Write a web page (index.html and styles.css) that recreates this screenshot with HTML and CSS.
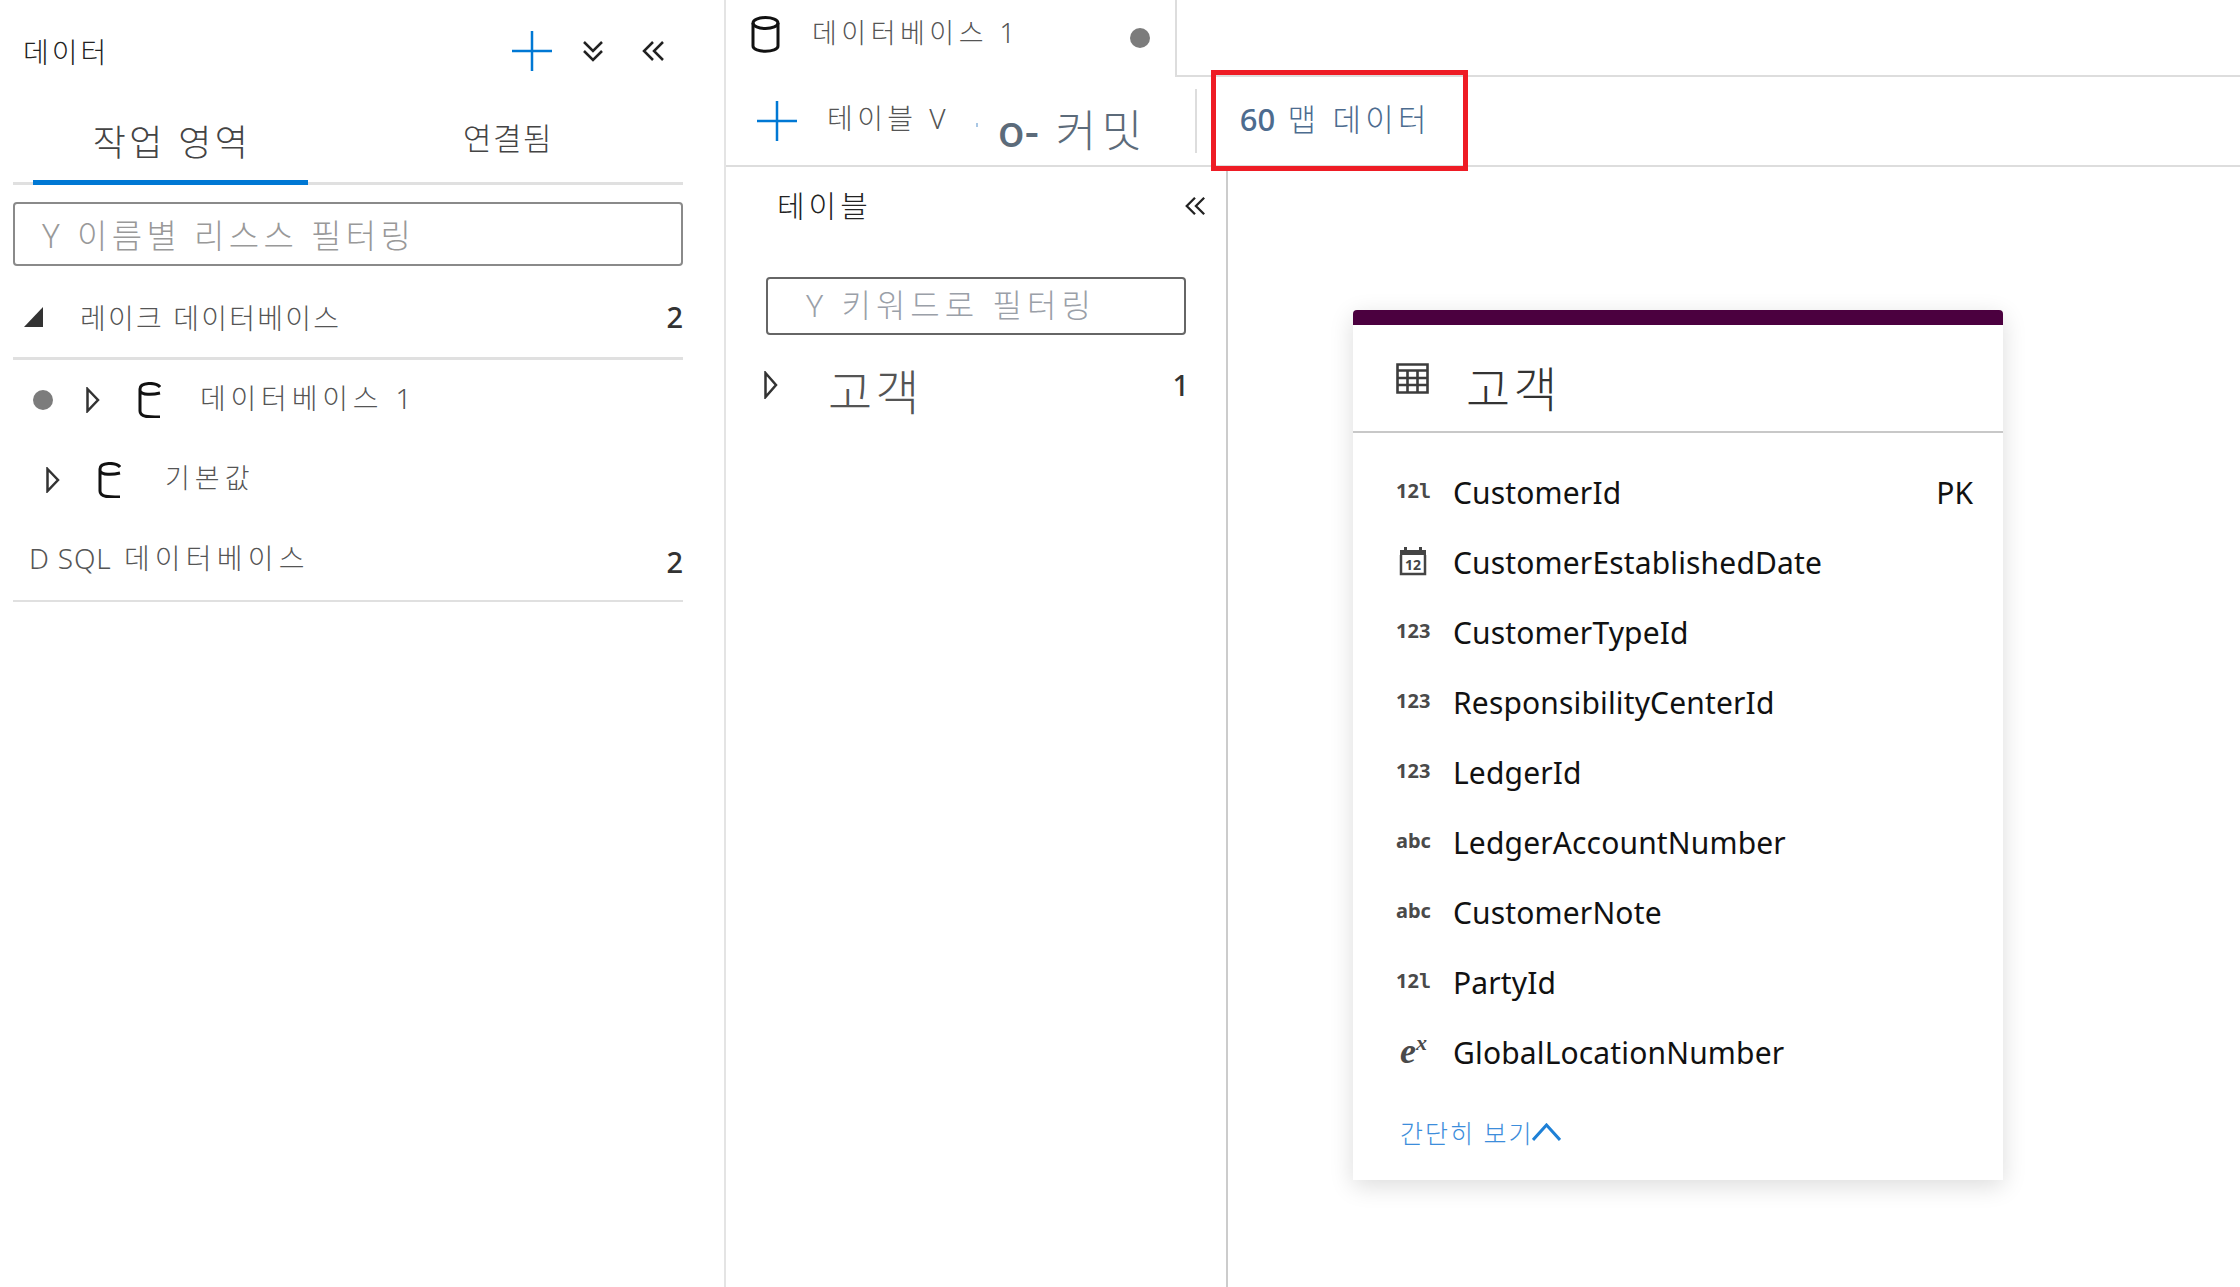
FILE: index.html
```html
<!DOCTYPE html>
<html lang="ko">
<head>
    <meta charset="UTF-8">
    <meta name="viewport" content="width=device-width, initial-scale=1.0">
    <title>데이터</title>
    <link rel="stylesheet" href="styles.css">
</head>
<body>
    <div class="app">
        <aside class="data-panel">
            <div class="panel-header">
                <span class="panel-title">데이터</span>
                <div class="panel-actions">
                    <svg class="icon-plus" width="40" height="40" viewBox="0 0 40 40"><path d="M20 0V40M0 20H40"/></svg>
                    <svg class="icon-line" width="24" height="24" viewBox="0 0 24 24"><path d="M3 3L12 12L21 3M3 12L12 21L21 12"/></svg>
                    <svg class="icon-line icon-collapse" width="24" height="24" viewBox="0 0 24 24"><path d="M12 3L3 12L12 21M22 3L13 12L22 21"/></svg>
                </div>
            </div>
            <div class="tabs">
                <div class="tab tab-active">작업 영역</div>
                <div class="tab tab-linked">연결됨</div>
            </div>
            <div class="search search-wide">Y 이름별 리스스 필터링</div>
            <div class="tree-row tree-group">
                <svg class="tri-open" width="20" height="20" viewBox="0 0 20 20"><path d="M19 0V20H0Z"/></svg>
                <span class="tree-label lake-label">레이크 데이터베이스</span>
                <span class="count">2</span>
            </div>
            <div class="tree-row db-row">
                <span class="dot"></span>
                <svg class="chevron" width="14" height="26" viewBox="0 0 14 26"><path d="M1.5 2L12 13L1.5 24Z"/></svg>
                <svg class="db-open" width="23" height="36" viewBox="0 0 23 36"><path d="M22 5C18 0 2 0 2 7V29C2 35 10 35 22 35M2 9C4 13 14 13 22 11"/></svg>
                <span class="tree-label db-label">데이터베이스 1</span>
            </div>
            <div class="tree-row default-row">
                <svg class="chevron" width="14" height="26" viewBox="0 0 14 26"><path d="M1.5 2L12 13L1.5 24Z"/></svg>
                <svg class="db-open" width="23" height="36" viewBox="0 0 23 36"><path d="M22 5C18 0 2 0 2 7V29C2 35 10 35 22 35M2 9C4 13 14 13 22 11"/></svg>
                <span class="tree-label default-label">기본값</span>
            </div>
            <div class="tree-row tree-group sql-row">
                <span class="tree-label"><span class="sql-prefix">D SQL</span> 데이터베이스</span>
                <span class="count">2</span>
            </div>
        </aside>

        <main class="workspace">
            <div class="tab-strip">
                <div class="doc-tab">
                    <svg class="db-closed" width="29" height="38" viewBox="0 0 29 38"><ellipse cx="14.5" cy="7" rx="12.5" ry="5.5"/><path d="M2 7V30C2 37 27 37 27 30V7"/></svg>
                    <span class="doc-title">데이터베이스 1</span>
                    <span class="dot doc-dot"></span>
                </div>
            </div>
            <div class="toolbar">
                <svg class="icon-plus" width="40" height="40" viewBox="0 0 40 40"><path d="M20 0V40M0 20H40"/></svg>
                <span class="tool-text">테이블 V</span>
                <span class="speck"></span>
                <span class="commit"><b>o-</b> 커밋</span>
                <span class="tool-sep"></span>
                <span class="map-data"><b>60</b> 맵 데이터</span>
                <span class="highlight"></span>
            </div>
            <div class="content">
                <section class="tables-pane">
                    <div class="pane-header">
                        <span class="pane-title">테이블</span>
                        <svg class="icon-line" width="22" height="22" viewBox="0 0 24 24"><path d="M12 3L3 12L12 21M22 3L13 12L22 21"/></svg>
                    </div>
                    <div class="search search-narrow">Y 키워드로 필터링</div>
                    <div class="table-row">
                        <svg class="chevron" width="14" height="28" viewBox="0 0 14 28"><path d="M1.5 2L12 14L1.5 26Z"/></svg>
                        <span class="table-name">고객</span>
                        <span class="table-count">1</span>
                    </div>
                </section>
                <section class="canvas">
                    <div class="entity-card">
                        <div class="card-head">
                            <svg class="icon-table" width="33" height="31" viewBox="0 0 33 31"><path d="M1.5 1.5H31.5V29.5H1.5ZM1.5 7.5H31.5M1.5 15H31.5M1.5 22H31.5M11.5 7.5V29.5M21.5 7.5V29.5"/></svg>
                            <span class="card-title">고객</span>
                        </div>
                        <ul class="field-list">
                            <li><span class="type">12<span class="type-l">l</span></span><span class="field-name">CustomerId</span><span class="pk">PK</span></li>
                            <li>
                                <span class="type"><svg class="icon-cal" width="28" height="30" viewBox="0 0 28 30"><path class="cal-solid" d="M1 4H5V1H8V4H20V1H23V4H27V9H1Z"/><path class="cal-line" d="M2 9V28H26V9"/><text x="14" y="24" class="cal-num">12</text></svg></span>
                                <span class="field-name">CustomerEstablishedDate</span>
                            </li>
                            <li><span class="type">123</span><span class="field-name">CustomerTypeId</span></li>
                            <li><span class="type">123</span><span class="field-name">ResponsibilityCenterId</span></li>
                            <li><span class="type">123</span><span class="field-name">LedgerId</span></li>
                            <li><span class="type">abc</span><span class="field-name">LedgerAccountNumber</span></li>
                            <li><span class="type">abc</span><span class="field-name">CustomerNote</span></li>
                            <li><span class="type">12<span class="type-l">l</span></span><span class="field-name">PartyId</span></li>
                            <li><span class="type type-exp">e<sup>x</sup></span><span class="field-name">GlobalLocationNumber</span></li>
                        </ul>
                        <div class="show-less">
                            <span>간단히 보기</span>
                            <svg width="29" height="18" viewBox="0 0 29 18"><path d="M1 17L14.5 2L28 17"/></svg>
                        </div>
                    </div>
                </section>
            </div>
        </main>
    </div>
</body>
</html>
```

FILE: styles.css
```css
* {
    box-sizing: border-box;
}

body {
    font-family: "Noto Sans", "Noto Sans CJK KR", sans-serif;
    background-color: #fff;
    margin: 0;
    color: #333;
}

.app {
    display: flex;
    width: 2240px;
    height: 1287px;
    overflow: hidden;
}

svg {
    flex: none;
    display: block;
    fill: none;
}

.icon-plus path {
    stroke: #0078d4;
    stroke-width: 2.5;
}

.icon-line path {
    stroke: #222;
    stroke-width: 2.5;
}

/* left panel */
.data-panel {
    width: 726px;
    flex: none;
    border-right: 2px solid #e4e4e4;
    padding: 0 41px 0 13px;
    font-weight: 300;
}

.panel-header {
    display: flex;
    align-items: center;
    justify-content: space-between;
    height: 102px;
    padding-left: 10px;
}

.panel-title {
    font-size: 28px;
    letter-spacing: 3px;
    color: #222;
}

.panel-actions {
    display: flex;
    align-items: center;
    gap: 29px;
    padding-right: 18px;
}

.icon-collapse {
    margin-left: 7px;
}

.tabs {
    display: flex;
    height: 83px;
    border-bottom: 3px solid #e0e0e0;
}

.tab {
    color: #444;
    text-align: center;
}

.tab-active {
    width: 275px;
    margin-left: 20px;
    height: 83px;
    font-size: 36px;
    letter-spacing: 3.3px;
    padding: 12px 0 0 3px;
    border-bottom: 5px solid #0078d4;
}

.tab-linked {
    font-size: 31px;
    letter-spacing: 1.5px;
    margin-left: 155px;
    padding-top: 12px;
}

.search {
    border: 2px solid #8a8a8a;
    border-radius: 4px;
    color: #999;
    display: flex;
    align-items: center;
}

.search-wide {
    height: 64px;
    margin-top: 17px;
    padding-left: 27px;
    font-size: 33px;
    letter-spacing: 4.35px;
}

.tree-row {
    display: flex;
    align-items: center;
    color: #555;
}

.tree-group {
    height: 94px;
    padding-top: 10px;
    border-bottom: 3px solid #e0e0e0;
}

.tree-label {
    font-size: 28px;
}

.lake-label {
    margin-left: 36px;
    letter-spacing: 2.2px;
}

.count {
    margin-left: auto;
    font-size: 29px;
    font-weight: 500;
    color: #333;
}

.tri-open path {
    fill: #333;
}

.tri-open {
    margin-left: 11px;
}

.db-row {
    height: 80px;
    padding-left: 20px;
}

.dot {
    width: 20px;
    height: 20px;
    border-radius: 50%;
    background-color: #7c7c7c;
    flex: none;
}

.chevron path {
    stroke: #333;
    stroke-width: 2.5;
}

.db-row .chevron {
    margin-left: 33px;
}

.db-open path {
    stroke: #111;
    stroke-width: 3;
}

.db-row .db-open {
    margin-left: 38px;
}

.db-label {
    margin: 0 0 7px 39px;
    letter-spacing: 4.8px;
}

.default-row {
    height: 80px;
    padding-left: 33px;
}

.default-row .db-open {
    margin-left: 38px;
}

.default-label {
    margin: 0 0 7px 44px;
    font-size: 27px;
    letter-spacing: 5px;
}

.sql-row {
    height: 82px;
    padding: 0 0 7px 16px;
    border-bottom-width: 2px;
}

.sql-row .tree-label {
    letter-spacing: 5.2px;
}

.sql-prefix {
    letter-spacing: 0.8px;
}

.sql-row .count {
    margin-top: 9px;
}

/* middle */
.workspace {
    flex: 1;
    min-width: 0;
}

.tab-strip {
    height: 77px;
    border-bottom: 2px solid #ddd;
    font-weight: 300;
}

.doc-tab {
    display: flex;
    align-items: center;
    width: 451px;
    height: 77px;
    padding: 0 25px 8px 25px;
    background-color: #fff;
    border-right: 2px solid #ddd;
}

.db-closed ellipse,
.db-closed path {
    stroke: #111;
    stroke-width: 3;
}

.doc-title {
    margin: 0 0 6px 32px;
    font-size: 27px;
    letter-spacing: 4.5px;
    color: #555;
}

.doc-dot {
    margin-left: auto;
    margin-top: 6px;
}

.toolbar {
    position: relative;
    display: flex;
    align-items: center;
    height: 90px;
    padding-left: 31px;
    border-bottom: 2px solid #ddd;
    font-weight: 300;
}

.tool-text {
    margin: 0 0 8px 30px;
    font-size: 28px;
    color: #555;
    letter-spacing: 4.4px;
}

.speck {
    width: 2px;
    height: 4px;
    margin: 8px 0 0 26px;
    background-color: #a9c7e4;
}

.commit {
    margin-left: 20px;
    margin-top: 14px;
    font-size: 44px;
    letter-spacing: 5.5px;
    color: #5c6b7a;
}

.commit b {
    font-weight: 500;
    letter-spacing: 0;
}

.tool-sep {
    width: 2px;
    height: 64px;
    margin-left: 47px;
    background-color: #ddd;
}

.map-data {
    margin: 0 0 8px 43px;
    font-size: 31px;
    letter-spacing: 4.2px;
    color: #4d6c8f;
}

.map-data b {
    font-weight: 500;
    letter-spacing: 0;
}

/* red annotation around the map data button */
.highlight {
    position: absolute;
    left: 485px;
    top: -7px;
    width: 257px;
    height: 101px;
    border: 5px solid #ee1c25;
}

.content {
    display: flex;
    height: 1120px;
}

.tables-pane {
    width: 502px;
    flex: none;
    border-right: 2px solid #ccc;
    font-weight: 300;
}

.pane-header {
    display: flex;
    align-items: center;
    justify-content: space-between;
    height: 78px;
    padding: 0 20px 0 51px;
}

.pane-title {
    font-size: 30px;
    letter-spacing: 4px;
    color: #222;
    margin-bottom: 5px;
}

.search-narrow {
    width: 420px;
    height: 58px;
    margin: 32px 0 0 40px;
    padding: 0 0 7px 38px;
    border-color: #666;
    color: #9aa0a8;
    font-size: 32px;
    letter-spacing: 5px;
}

.table-row {
    display: flex;
    align-items: center;
    padding: 10px 37px 0 38px;
}

.table-name {
    margin-left: 50px;
    font-size: 48px;
    letter-spacing: 3px;
    color: #555;
    margin-top: 9px;
}

.table-count {
    margin-left: auto;
    font-size: 29px;
    font-weight: 500;
    color: #333;
}

/* entity card */
.canvas {
    flex: 1;
    padding: 143px 0 0 125px;
}

.entity-card {
    width: 650px;
    height: 870px;
    border-top: 15px solid #4b003f;
    border-radius: 4px 4px 0 0;
    background-color: #fff;
    box-shadow: 0 6px 24px rgba(0, 0, 0, 0.14);
}

.card-head {
    display: flex;
    align-items: center;
    height: 108px;
    padding: 0 0 0 43px;
    border-bottom: 2px solid #c8c8c8;
}

.icon-table path {
    stroke: #3c3c3c;
    stroke-width: 2.6;
}

.card-title {
    margin-left: 37px;
    font-size: 48px;
    font-weight: 300;
    letter-spacing: 3px;
    color: #333;
    margin-top: 16px;
}

.field-list {
    list-style-type: none;
    margin: 0;
    padding: 24px 0 0;
}

.field-list li {
    display: flex;
    align-items: center;
    height: 70px;
    padding: 0 30px 0 43px;
}

.type {
    width: 57px;
    flex: none;
    font-size: 20px;
    font-weight: 700;
    color: #4a4a4a;
    margin-top: -3px;
}

.type-l {
    font-family: "DejaVu Sans Mono", monospace;
    font-weight: 700;
}

.type-exp {
    font-family: "Liberation Serif", serif;
    font-style: italic;
    font-size: 36px;
    line-height: 1;
    padding-left: 4px;
}

.type-exp sup {
    font-size: 22px;
    line-height: 0;
}

.field-name {
    font-size: 30px;
    letter-spacing: 0.15px;
    color: #111;
}

.pk {
    margin-left: auto;
    font-size: 30px;
    color: #111;
}

.icon-cal {
    margin-left: 3px;
}

.cal-solid {
    fill: #444;
}

.cal-line {
    stroke: #444;
    stroke-width: 2.5;
}

.cal-num {
    fill: #444;
    font-size: 14px;
    font-weight: 700;
    text-anchor: middle;
}

.show-less {
    display: flex;
    align-items: center;
    margin-top: 27px;
    padding-left: 47px;
    color: #3c8ddb;
    font-size: 25px;
    font-weight: 300;
    letter-spacing: 2px;
}

.show-less svg path {
    stroke: #1e80d6;
    stroke-width: 3;
}

.show-less svg {
    margin-left: -2px;
}
```
